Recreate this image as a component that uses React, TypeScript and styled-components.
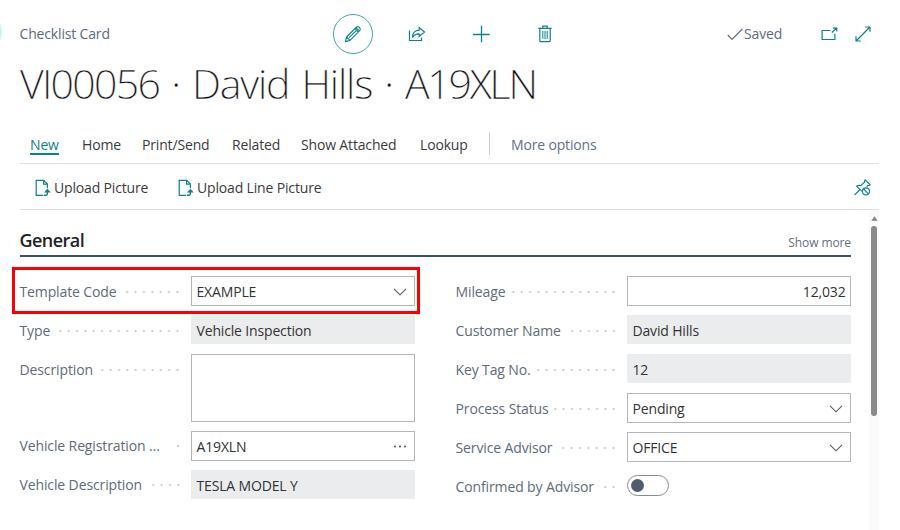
import React from 'react';
import styled, { createGlobalStyle, css } from 'styled-components';

const teal = '#0b8389';
const slate = '#5e6b7c';

const GlobalStyle = createGlobalStyle`
  *, *::before, *::after { box-sizing: border-box; }
  body { margin: 0; background: #fff; overflow: hidden; }
`;

const Page = styled.main`
  position: relative;
  width: 900px;
  height: 530px;
  padding-left: 20px;
  overflow: hidden;
  font: 400 14px/20px "Open Sans", "Noto Sans", sans-serif;
  letter-spacing: -0.16px;
  color: #3b3b3d;
  svg { display: block; fill: none; }
`;

const BackEdge = styled.div`
  position: absolute;
  left: -34px;
  top: 14px;
  width: 36px;
  height: 36px;
  border-radius: 50%;
  background: #d3f0f1;
`;

const TopBar = styled.header`
  display: grid;
  grid-template-columns: 313px 1fr 145px;
  align-items: center;
  width: 852px;
  height: 40px;
  margin-top: 14px;
`;

const Caption = styled.span`
  color: ${slate};
  margin: -1px 0 0 -0.5px;
`;

const Actions = styled.div`
  display: flex;
  align-items: center;
`;

const IconButton = styled.button<{ $gap?: number }>`
  display: flex;
  padding: 0;
  border: 0;
  background: none;
  color: ${teal};
  margin-left: ${p => p.$gap ?? 0}px;
`;

const EditButton = styled(IconButton)`
  width: 40px;
  height: 40px;
  align-items: center;
  justify-content: center;
  border: 1px solid #3fa5a9;
  border-radius: 50%;
`;

const Status = styled.div`
  display: flex;
  align-items: center;
  color: ${slate};
`;

const SavedText = styled.span`
  width: 41px;
  margin-top: -1px;
  padding-left: 1px;
  white-space: nowrap;
`;

const Title = styled.h1`
  margin: 0;
  height: 74px;
  font-size: 41px;
  line-height: 58px;
  font-weight: 300;
  letter-spacing: -1.15px;
  word-spacing: 2.6px;
  color: #101012;
  white-space: nowrap;
  -webkit-text-stroke: 0.35px #fff;
`;

const Code = styled.span<{ $tracking: number }>`
  letter-spacing: ${p => p.$tracking}px;
`;

const Tabs = styled.nav`
  display: flex;
  align-items: flex-start;
  height: 36px;
  padding: 7px 0 0 10px;
  margin-right: 21px;
  border-bottom: 1px solid #dddfe2;
  white-space: nowrap;
`;

const Tab = styled.a<{ $width: number; $active?: boolean }>`
  width: ${p => p.$width}px;
  flex: none;
  ${p => p.$active && css`color: ${teal};`}
`;

const TabLabel = styled.span<{ $active?: boolean }>`
  display: inline-block;
  height: 20px;
  ${p => p.$active && css`
    border-bottom: 2px solid ${teal};
    width: 29px;
  `}
`;

const Separator = styled.span`
  width: 1px;
  height: 23px;
  margin: -3px 21px 0 0;
  background: #cdcfd8;
`;

const MoreOptions = styled.a`
  color: #63718a;
`;

const Ribbon = styled.div`
  display: flex;
  align-items: center;
  height: 46px;
  padding: 2px 8px 0 15px;
  margin-right: 21px;
  border-bottom: 1px solid #dddfe2;
`;

const UploadAction = styled.a<{ $width: number }>`
  display: flex;
  align-items: center;
  gap: 3px;
  width: ${p => p.$width}px;
  color: #3b3b3d;
  white-space: nowrap;
  svg { color: ${teal}; flex: none; }
`;

const PinButton = styled(IconButton)`
  margin-left: auto;
`;

const Body = styled.div`
  display: grid;
  grid-template-columns: 831px 18px 10px;
  height: 320px;
`;

const Section = styled.section`
  grid-column: 1;
`;

const SectionHeader = styled.div`
  display: flex;
  justify-content: space-between;
  align-items: center;
  height: 47px;
  padding-top: 15px;
  border-bottom: 2px solid #3f5364;
`;

const Heading = styled.h2`
  margin: 0 0 0 -0.5px;
  font-size: 18px;
  line-height: 26px;
  font-weight: 600;
  letter-spacing: -0.55px;
  color: #222225;
`;

const ShowMore = styled.a`
  font-size: 12px;
  letter-spacing: -0.1px;
  color: #667181;
  padding-top: 5px;
`;

const Columns = styled.div`
  display: grid;
  grid-template-columns: 395px 395px;
  justify-content: space-between;
  padding-top: 19px;
`;

const Column = styled.div`
  display: flex;
  flex-direction: column;
  gap: 9px;
`;

const Row = styled.div<{ $memo?: boolean }>`
  position: relative;
  display: grid;
  grid-template-columns: 163px 223.5px;
  grid-template-rows: 100%;
  column-gap: 8px;
  height: ${p => (p.$memo ? 68 : 30)}px;
  margin-bottom: ${p => (p.$memo ? -0.5 : 0)}px;
`;

const Highlight = styled.div`
  position: absolute;
  left: -8px;
  top: -9px;
  width: 408px;
  height: 47px;
  border: 3px solid #fa0000;
`;

const LabelArea = styled.div`
  display: flex;
  justify-content: space-between;
  align-items: center;
  height: 31px;
  margin-left: -0.5px;
  padding-right: 1px;
  letter-spacing: -0.12px;
  color: ${slate};
  white-space: nowrap;
`;

const Dots = styled.span<{ $count: number }>`
  flex: none;
  width: ${p => p.$count * 8.37}px;
  height: 8px;
  background: radial-gradient(circle at 50% 50%, #c3c6ca 0.7px, transparent 1.3px) right center / 8.37px 8px repeat-x;
`;

const Field = styled.div<{ $readOnly?: boolean; $end?: boolean }>`
  display: flex;
  align-items: center;
  justify-content: ${p => (p.$end ? 'flex-end' : 'space-between')};
  padding: ${p => (p.$readOnly ? 3 : 2)}px ${p => (p.$end ? 4 : 7)}px 0 4.5px;
  height: ${p => (p.$readOnly ? '29px' : '100%')};
  border: 1px solid ${p => (p.$readOnly ? '#ebecee' : '#b1b6c0')};
  background: ${p => (p.$readOnly ? '#ebecee' : '#fff')};
  color: #333335;
  white-space: nowrap;
`;

const Toggle = styled.button`
  display: flex;
  align-items: center;
  width: 42px;
  height: 21px;
  margin-top: 4px;
  padding: 0 3px;
  border: 1px solid #848c99;
  border-radius: 11px;
  background: #fff;
`;

const Knob = styled.span`
  width: 13px;
  height: 13px;
  border-radius: 50%;
  background: #505c6d;
`;

const Scrollbar = styled.div`
  grid-column: 3;
  display: flex;
  flex-direction: column;
  align-items: center;
  padding-top: 6px;
  background: #fafafa;
`;

const Thumb = styled.div`
  width: 6px;
  height: 190px;
  margin-top: 5px;
  border-radius: 3px;
  background: #8a8a8a;
`;

const PencilIcon = () => (
  <svg width="18" height="18" viewBox="0 0 18 18" stroke="currentColor" strokeWidth="1.1" strokeLinejoin="round">
    <path d="M1.4 16.6 2.6 12 12.6 2c1.5-1.4 4.7 1.5 3.3 3.3L6 15.4Z M11 3.7l3.3 3.3 M12 2.7l3.3 3.2 M2.6 12 6 15.4 M5.1 12.7 13 4.9" />
  </svg>
);

const ShareIcon = () => (
  <svg width="18" height="16" viewBox="0 0 18 16" stroke="currentColor" strokeWidth="1.2">
    <path d="M1.5 4.5v10h12v-3" />
    <path d="M4.4 11.5C4.6 6.8 7.3 4.4 11.2 4.2V1.5L16.5 6l-5.3 4.4V7.8C8 7.7 6 8.8 4.4 11.5Z" />
  </svg>
);

const PlusIcon = () => (
  <svg width="18" height="18" viewBox="0 0 18 18" stroke="currentColor" strokeWidth="1.3">
    <path d="M9.5 .7v16.6M1 9.5h16.6" />
  </svg>
);

const TrashIcon = () => (
  <svg width="14" height="18" viewBox="0 0 14 18" stroke="currentColor" strokeWidth="1.2">
    <path d="M.3 3.3h13.4M4.8 3V1.2h4.4V3M1.8 3.5v12.2q0 1 1 1h8.4q1 0 1-1V3.5" />
    <path d="M4.8 6v8M7 6v8M9.2 6v8" strokeWidth="1" />
  </svg>
);

const CheckIcon = () => (
  <svg width="16" height="13" viewBox="0 0 16 13" stroke="currentColor" strokeWidth="1.2">
    <path d="m.8 7 4.2 4.3L15.3 1" />
  </svg>
);

const PopOutIcon = () => (
  <svg width="17" height="14" viewBox="0 0 17 14" stroke="currentColor" strokeWidth="1.2">
    <path d="M9.5 3.5h-8.4v9h12.8V6.7M10.8 5.5l4.7-4.3M12 1.1h3.8v3.5" />
  </svg>
);

const ExpandIcon = () => (
  <svg width="16" height="16" viewBox="0 0 16 16" stroke="currentColor" strokeWidth="1.2">
    <path d="M1.1 15 14.9 1M10.2 1h4.8v4.8M1 10.2V15h4.8" />
  </svg>
);

const UploadIcon = () => (
  <svg width="16" height="18" viewBox="0 0 16 18" stroke="currentColor" strokeWidth="1.2">
    <path d="M8.2 16.4H1.2V1.3h7.6l3.6 3.6v4.4M8.6 1.5v3.6h3.6" />
    <path d="M8.9 16.3h2c1 0 1.4-.5 1.4-1.3v-3" strokeWidth="1.4" />
    <path d="m9 13.5 3.4-3.8 3.4 3.8Z" fill="currentColor" stroke="none" />
  </svg>
);

const UnpinIcon = () => (
  <svg width="17" height="17" viewBox="0 0 17 17" stroke="currentColor" strokeWidth="1.1">
    <path d="M.6 16 6 10.5M7.8 12.4 2.5 7.2c1.5-.9 2.8-1 4.3-.6L10.6 3c-.2-.8 0-1.5.5-2.2l5 5c-.6.6-1.4.8-2.2.6l-1.3 1.4" />
    <circle cx="12" cy="12.4" r="3.5" />
    <path d="m9.6 10 4.8 4.8" />
  </svg>
);

const Chevron = () => (
  <svg width="14" height="8" viewBox="0 0 14 8" stroke="#56585c" strokeWidth="1.1">
    <path d="m1 .8 6 6 6-6" />
  </svg>
);

const Ellipsis = () => (
  <svg width="14" height="4" viewBox="0 0 14 4">
    <g fill="#47494d">
      <circle cx="2" cy="1.5" r=".95" /><circle cx="7" cy="1.5" r=".95" /><circle cx="12" cy="1.5" r=".95" />
    </g>
  </svg>
);

const ScrollUpIcon = () => (
  <svg width="7" height="5" viewBox="0 0 7 5">
    <path d="M3.5.2 6.7 4.8H.3Z" fill="#858585" />
  </svg>
);

type Item = {
  label: string;
  dots: number;
  value?: string;
  kind?: 'lookup' | 'assist' | 'readonly' | 'number' | 'toggle' | 'memo';
  highlighted?: boolean;
};

const left: Item[] = [
  { label: 'Template Code', dots: 7, value: 'EXAMPLE', kind: 'lookup', highlighted: true },
  { label: 'Type', dots: 15, value: 'Vehicle Inspection', kind: 'readonly' },
  { label: 'Description', dots: 10, kind: 'memo' },
  { label: 'Vehicle Registration ...', dots: 1, value: 'A19XLN', kind: 'assist' },
  { label: 'Vehicle Description', dots: 4, value: 'TESLA MODEL Y', kind: 'readonly' },
];

const right: Item[] = [
  { label: 'Mileage', dots: 13, value: '12,032', kind: 'number' },
  { label: 'Customer Name', dots: 6, value: 'David Hills', kind: 'readonly' },
  { label: 'Key Tag No.', dots: 10, value: '12', kind: 'readonly' },
  { label: 'Process Status', dots: 8, value: 'Pending', kind: 'lookup' },
  { label: 'Service Advisor', dots: 7, value: 'OFFICE', kind: 'lookup' },
  { label: 'Confirmed by Advisor', dots: 2, kind: 'toggle' },
];

const FormRow = ({ item }: { item: Item }) => (
  <Row $memo={item.kind === 'memo'}>
    <LabelArea>
      <span>{item.label}</span>
      <Dots $count={item.dots} />
    </LabelArea>
    {item.kind === 'toggle' ? (
      <Toggle aria-label={item.label}><Knob /></Toggle>
    ) : (
      <Field $readOnly={item.kind === 'readonly'} $end={item.kind === 'number'}>
        <span>{item.value}</span>
        {item.kind === 'lookup' && <Chevron />}
        {item.kind === 'assist' && <Ellipsis />}
      </Field>
    )}
    {item.highlighted && <Highlight />}
  </Row>
);

const tabs: [string, number][] = [
  ['New', 52], ['Home', 60], ['Print/Send', 90], ['Related', 69], ['Show Attached', 119], ['Lookup', 69],
];

export default function App() {
  return (
    <>
      <GlobalStyle />
      <Page>
        <BackEdge />
        <TopBar>
          <Caption>Checklist Card</Caption>
          <Actions>
            <EditButton aria-label="Edit"><PencilIcon /></EditButton>
            <IconButton $gap={35} aria-label="Share"><ShareIcon /></IconButton>
            <IconButton $gap={46} aria-label="New"><PlusIcon /></IconButton>
            <IconButton $gap={48} aria-label="Delete"><TrashIcon /></IconButton>
          </Actions>
          <Status>
            <CheckIcon />
            <SavedText>Saved</SavedText>
            <IconButton $gap={37} aria-label="Open in new window"><PopOutIcon /></IconButton>
            <IconButton $gap={17} aria-label="Expand"><ExpandIcon /></IconButton>
          </Status>
        </TopBar>
        <Title>
          <Code $tracking={-1.7}>VI00056</Code> · David Hills · <Code $tracking={-2.2}>A19XLN</Code>
        </Title>
        <Tabs>
          {tabs.map(([name, width], i) => (
            <Tab key={name} $width={width} $active={i === 0}>
              <TabLabel $active={i === 0}>{name}</TabLabel>
            </Tab>
          ))}
          <Separator />
          <MoreOptions>More options</MoreOptions>
        </Tabs>
        <Ribbon>
          <UploadAction $width={143}><UploadIcon />Upload Picture</UploadAction>
          <UploadAction $width={150}><UploadIcon />Upload Line Picture</UploadAction>
          <PinButton aria-label="Unpin"><UnpinIcon /></PinButton>
        </Ribbon>
        <Body>
          <Section>
            <SectionHeader>
              <Heading>General</Heading>
              <ShowMore>Show more</ShowMore>
            </SectionHeader>
            <Columns>
              <Column>{left.map(item => <FormRow key={item.label} item={item} />)}</Column>
              <Column>{right.map(item => <FormRow key={item.label} item={item} />)}</Column>
            </Columns>
          </Section>
          <Scrollbar>
            <ScrollUpIcon />
            <Thumb />
          </Scrollbar>
        </Body>
      </Page>
    </>
  );
}
